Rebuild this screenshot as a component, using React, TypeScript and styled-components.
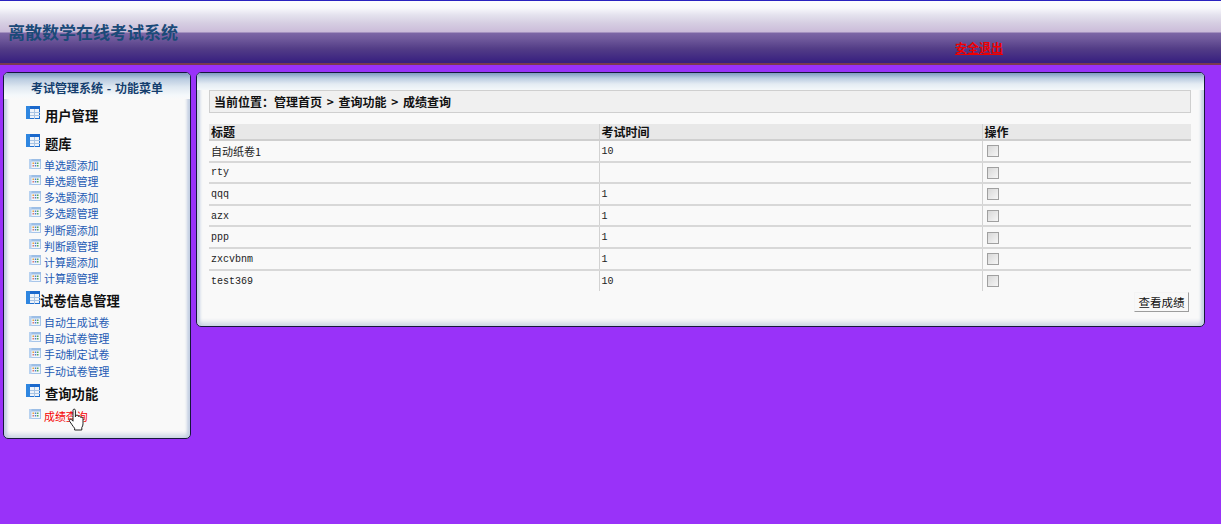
import React from 'react'
import styled, { createGlobalStyle } from 'styled-components'

const cjk = '"Noto Sans CJK SC", "Liberation Sans", sans-serif'

const GlobalStyle = createGlobalStyle`
  html, body {
    margin: 0;
    padding: 0;
    background: #9932f9;
    font-family: ${cjk};
  }
`
const Page = styled.div`
  width: 1221px;
  height: 524px;
  overflow: hidden;
  background: #9932f9;
`
const Header = styled.header`
  height: 62px;
  border-top: 1px solid #2a22c0;
  border-bottom: 2px solid #7a3a50;
  background: linear-gradient(
    #fdfdfe 0, #f8f8fc 7px, #e4e2ee 14px, #d6cee2 22px, #cbbcd9 31px,
    #7d67a6 32px, #6f599b 38px, #523c86 48px, #382080 61px
  );
  display: flex;
  position: relative;
`
const SiteTitle = styled.h1`
  margin: 20px 0 0 8px;
  font-size: 17px;
  line-height: 21px;
  height: 21px;
  font-weight: 600;
  color: #1b4a78;
`
const Logout = styled.a`
  margin: 38px 0 0 777px;
  font-size: 12px;
  line-height: 18px;
  height: 18px;
  font-weight: 700;
  color: #f00000;
  text-decoration: underline;
`
const Main = styled.main`
  display: flex;
  align-items: flex-start;
  gap: 5px;
  padding: 7px 0 0 3px;
`
const Panel = styled.section<{ $width: number; $height: number }>`
  box-sizing: border-box;
  width: ${p => p.$width}px;
  height: ${p => p.$height}px;
  border-radius: 5px;
  border: 1px solid #16163e;
  background: #f9f9f9;
  box-shadow:
    inset 4px 0 3px -1px #c4d0e2,
    inset -4px 0 3px -1px #c4d0e2,
    inset 0 -5px 4px -1px #d0d8e6;
  overflow: hidden;
`
const SideTitle = styled.div`
  height: 26px;
  line-height: 30px;
  padding-left: 27px;
  font-size: 12px;
  font-weight: 700;
  word-spacing: 1px;
  color: #143e6e;
  white-space: pre;
  background: linear-gradient(#7f9bc0 0, #b9cbe0 6px, #dfe8f1 14px, #f4f8fb 22px, #f9f9f9 26px);
`
const Menu = styled.nav`
  display: flex;
  flex-direction: column;
`
const GroupRow = styled.div<{ $top: number; $gap: number }>`
  display: flex;
  align-items: flex-start;
  height: 20px;
  margin-top: ${p => p.$top}px;
  padding-left: 22px;
  margin-bottom: ${p => p.$gap}px;
`
const GroupLabel = styled.span<{ $tight?: boolean }>`
  margin-left: ${p => (p.$tight ? 0 : 5)}px;
  margin-top: 1px;
  font-size: 13.3px;
  line-height: 18px;
  font-weight: 700;
  color: #111;
`
const Item = styled.a<{ $active?: boolean }>`
  display: flex;
  align-items: center;
  height: 16.15px;
  padding-left: 25px;
  font-size: 10.9px;
  line-height: 16px;
  color: ${p => (p.$active ? '#f50000' : '#1c5ab4')};
`
const ItemIcon = styled.svg`
  width: 12px;
  height: 10px;
  margin: -3px 3px 0 0;
  flex-shrink: 0;
`
const GroupIcon = styled.svg`
  width: 14px;
  height: 13px;
  flex-shrink: 0;
`
const ActiveSlot = styled.div`
  position: relative;
`
const Pointer = styled.svg`
  position: absolute;
  left: 64px;
  top: 0;
  width: 18px;
  height: 23px;
`
const Content = styled(Panel)`
  padding: 0;
`
const ContentTop = styled.div`
  height: 17px;
  background: linear-gradient(#7f9bc0 0, #b9cbe0 5px, #e4ecf3 11px, #f4f8fa 17px);
`
const Crumb = styled.div`
  box-sizing: border-box;
  height: 23px;
  margin: 0 13px 0 12px;
  padding-left: 4px;
  border: 1px solid #cfcfcf;
  background: #f0f0f0;
  font-size: 12px;
  line-height: 21px;
  font-weight: 700;
  word-spacing: 2px;
  color: #111;
  white-space: pre;
`
const Grid = styled.table`
  width: 982px;
  margin: 11px 0 0 12px;
  border-collapse: collapse;
  table-layout: fixed;
  font-size: 11px;
  color: #222;
`
const HeadCell = styled.th`
  height: 15px;
  padding: 0 0 0 2px;
  background: #e8e8e8;
  border-bottom: 2px solid #cfcfcf;
  text-align: left;
  font-size: 12px;
  line-height: 15px;
  font-weight: 700;
  color: #111;
  & + & {
    border-left: 1px solid #d2d2d2;
  }
`
const Row = styled.tr`
  height: 21.6px;
  &:not(:last-child) td {
    border-bottom: 2px solid #d8d8d8;
  }
`
const Cell = styled.td<{ $mono?: boolean }>`
  padding: ${p => (p.$mono ? '2px' : '0')} 0 0 2px;
  font-family: ${p => (p.$mono ? '"Liberation Mono", monospace' : '"Noto Sans CJK SC", sans-serif')};
  font-size: ${p => (p.$mono ? '10px' : '11px')};
  line-height: 14px;
  & + & {
    border-left: 1px solid #d2d2d2;
  }
`
const Check = styled.span`
  display: block;
  box-sizing: border-box;
  width: 12px;
  height: 12px;
  margin: 1px 0 0 2px;
  border: 1px solid #a0a0a0;
  background: linear-gradient(135deg, #d8d8d8, #f6f6f6);
`
const Footer = styled.div`
  display: flex;
  justify-content: flex-end;
  padding: 1px 15px 0 0;
`
const ViewButton = styled.button`
  box-sizing: border-box;
  width: 55px;
  height: 20px;
  padding: 0;
  border: 1px solid;
  border-color: #f4f4f4 #9c9c9c #9c9c9c #f4f4f4;
  background: #f8f8f8;
  font-family: ${cjk};
  font-size: 11.5px;
  line-height: 17px;
  color: #111;
`

function TableGlyph() {
  return (
    <GroupIcon viewBox="0 0 14 13">
      <rect x="0.5" y="0.5" width="13" height="12" fill="#eef3fa" stroke="#1f6fd0" />
      <rect x="0" y="0" width="14" height="3" fill="#1a68cc" />
      <rect x="0" y="0" width="4" height="13" fill="#2f86e0" />
      <path d="M4 6.500h10M4 9.500h10M8.500 3v10" stroke="#a8c4e4" strokeWidth="1" />
    </GroupIcon>
  )
}

function SmallGlyph() {
  return (
    <ItemIcon viewBox="0 0 12 10">
      <rect x="0.5" y="0.5" width="11" height="9" fill="#f2f6fb" stroke="#a8c6ea" />
      <rect x="0" y="0" width="12" height="2.500" fill="#9cbee6" />
      <rect x="0" y="0" width="2.500" height="10" fill="#b8d2f0" />
      <rect x="3.500" y="3.500" width="1.500" height="1.500" fill="#e8a040" />
      <rect x="5.800" y="3.500" width="1.500" height="1.500" fill="#4a80c8" />
      <rect x="8" y="3.500" width="1.500" height="1.500" fill="#58a858" />
      <rect x="3.500" y="6" width="1.500" height="1.500" fill="#d87878" />
      <rect x="5.800" y="6" width="1.500" height="1.500" fill="#4a80c8" />
      <rect x="8" y="6" width="1.500" height="1.500" fill="#58a858" />
    </ItemIcon>
  )
}

function HandPointer() {
  return (
    <Pointer viewBox="0 0 18 23">
      <path
        d="M5 2.200C5 .8 7.400.8 7.400 2.200V9l.4-1.600c1.600-.5 2.400 0 2.500 1 1.500-.6 2.300-.1 2.400 1 1.400-.4 2.300.2 2.300 1.300v5.200c0 1.600-.6 2.600-1.200 3.600V22H6.600v-1.800C5 18.400 3.200 15.500 1.600 13.200.8 12 2.400 10.600 3.500 11.600L5 13.200Z"
        fill="#fff"
        stroke="#222"
        strokeWidth="1"
      />
    </Pointer>
  )
}

const columns = ['标题', '考试时间', '操作']
const exams: [string, string][] = [
  ['自动纸卷1', '10'],
  ['rty', ''],
  ['qqq', '1'],
  ['azx', '1'],
  ['ppp', '1'],
  ['zxcvbnm', '1'],
  ['test369', '10'],
]
const questionLinks = [
  '单选题添加', '单选题管理', '多选题添加', '多选题管理',
  '判断题添加', '判断题管理', '计算题添加', '计算题管理',
]
const paperLinks = ['自动生成试卷', '自动试卷管理', '手动制定试卷', '手动试卷管理']

export default function App() {
  return (
    <Page>
      <GlobalStyle />
      <Header>
        <SiteTitle>离散数学在线考试系统</SiteTitle>
        <Logout>安全退出</Logout>
      </Header>
      <Main>
        <Panel $width={188} $height={367}>
          <SideTitle>{'考试管理系统 - 功能菜单'}</SideTitle>
          <Menu>
            <GroupRow $top={7} $gap={0}>
              <TableGlyph />
              <GroupLabel>用户管理</GroupLabel>
            </GroupRow>
            <GroupRow $top={8} $gap={3}>
              <TableGlyph />
              <GroupLabel>题库</GroupLabel>
            </GroupRow>
            {questionLinks.map(label => (
              <Item key={label}>
                <SmallGlyph />
                {label}
              </Item>
            ))}
            <GroupRow $top={5} $gap={3}>
              <TableGlyph />
              <GroupLabel $tight>试卷信息管理</GroupLabel>
            </GroupRow>
            {paperLinks.map(label => (
              <Item key={label}>
                <SmallGlyph />
                {label}
              </Item>
            ))}
            <GroupRow $top={5} $gap={4}>
              <TableGlyph />
              <GroupLabel>查询功能</GroupLabel>
            </GroupRow>
            <ActiveSlot>
              <Item $active>
                <SmallGlyph />
                成绩查询
              </Item>
              <HandPointer />
            </ActiveSlot>
          </Menu>
        </Panel>
        <Content $width={1009} $height={255}>
          <ContentTop />
          <Crumb>{'当前位置：管理首页 > 查询功能 > 成绩查询'}</Crumb>
          <Grid>
            <colgroup>
              <col width="390" />
              <col width="383" />
              <col width="209" />
            </colgroup>
            <thead>
              <tr>
                {columns.map(name => (
                  <HeadCell key={name}>{name}</HeadCell>
                ))}
              </tr>
            </thead>
            <tbody>
              {exams.map(([title, minutes]) => (
                <Row key={title}>
                  <Cell $mono={title !== '自动纸卷1'}>{title}</Cell>
                  <Cell $mono>{minutes}</Cell>
                  <Cell>
                    <Check />
                  </Cell>
                </Row>
              ))}
            </tbody>
          </Grid>
          <Footer>
            <ViewButton>查看成绩</ViewButton>
          </Footer>
        </Content>
      </Main>
    </Page>
  )
}
